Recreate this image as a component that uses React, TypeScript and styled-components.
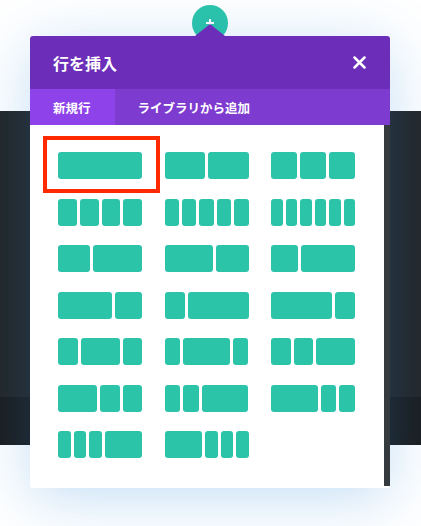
import styled, { createGlobalStyle } from 'styled-components';

const GlobalStyle = createGlobalStyle`
  body {
    margin: 0;
    background: #fff;
    font-family: 'Noto Sans CJK JP', 'Noto Sans', sans-serif;
  }
`;

const LAYOUTS: number[][] = [
  [1],
  [1, 1],
  [1, 1, 1],
  [1, 1, 1, 1],
  [1, 1, 1, 1, 1],
  [1, 1, 1, 1, 1, 1],
  [2, 3],
  [3, 2],
  [1, 2],
  [2, 1],
  [1, 3],
  [3, 1],
  [1, 2, 1],
  [1, 3, 1],
  [1, 1, 2],
  [2, 1, 1],
  [1, 1, 3],
  [3, 1, 1],
  [1, 1, 1, 3],
  [3, 1, 1, 1],
];

const App = () => {
  return (
    <Page>
      <GlobalStyle />
      <TopSpace />
      <DarkSection />
      <DarkerSection />

      <AddButton>
        <svg width="10" height="10" viewBox="0 0 10 10">
          <path d="M5 1v8M1 5h8" stroke="#fff" strokeWidth="2" />
        </svg>
      </AddButton>

      <Modal>
        <Pointer />
        <Header>
          <Title>行を挿入</Title>
          <CloseButton>
            <svg width="13" height="13" viewBox="0 0 13 13">
              <path d="M1.5 1.5l10 10M11.5 1.5l-10 10" stroke="#fff" strokeWidth="2.5" strokeLinecap="round" />
            </svg>
          </CloseButton>
        </Header>
        <Tabs>
          <Tab $active>新規行</Tab>
          <Tab>ライブラリから追加</Tab>
        </Tabs>
        <Body>
          <LayoutGrid>
            {LAYOUTS.map((cols, i) => (
              <LayoutOption key={i} $selected={i === 0}>
                {cols.map((c, j) => (
                  <Column key={j} $grow={c} />
                ))}
              </LayoutOption>
            ))}
          </LayoutGrid>
          <Scrollbar />
        </Body>
      </Modal>
    </Page>
  );
};

export default App;

const Page = styled.div`
  position: relative;
  width: 421px;
  height: 526px;
  overflow: hidden;
`;

const TopSpace = styled.div`
  height: 111px;
`;

const DarkSection = styled.div`
  height: 286px;
  background: #232527;
`;

const DarkerSection = styled.div`
  height: 48px;
  background: #1b1c1d;
`;

const AddButton = styled.div`
  position: absolute;
  left: 192px;
  top: 5px;
  width: 36px;
  height: 36px;
  border-radius: 50%;
  background: #2bc4a9;
  display: flex;
  align-items: center;
  justify-content: center;
`;

const Modal = styled.div`
  position: absolute;
  left: 30px;
  top: 36px;
  width: 360px;
  background: #fff;
  border-radius: 3px;
  box-shadow: 0 10px 60px rgba(43, 135, 218, 0.28);
`;

const Pointer = styled.div`
  position: absolute;
  left: 165px;
  top: -12px;
  width: 0;
  height: 0;
  border-left: 15px solid transparent;
  border-right: 15px solid transparent;
  border-bottom: 12px solid #6c2eb9;
`;

const Header = styled.div`
  height: 53px;
  background: #6c2eb9;
  border-radius: 3px 3px 0 0;
  display: flex;
  align-items: center;
  justify-content: space-between;
  padding: 0 24px 0 23px;
`;

const Title = styled.div`
  color: #fff;
  font-size: 16px;
  font-weight: 700;
`;

const CloseButton = styled.div`
  display: flex;
  align-items: center;
  cursor: pointer;
`;

const Tabs = styled.div`
  height: 36px;
  background: #7d3bcf;
  display: flex;
`;

const Tab = styled.div<{ $active?: boolean }>`
  display: flex;
  align-items: center;
  padding: 0 24px 0 23px;
  color: #fff;
  font-size: 12.5px;
  font-weight: 700;
  background: ${({ $active }) => ($active ? '#8e42ea' : 'transparent')};
`;

const Body = styled.div`
  display: flex;
  justify-content: space-between;
`;

const LayoutGrid = styled.div`
  display: grid;
  grid-template-columns: repeat(3, 84px);
  grid-auto-rows: 27px;
  column-gap: 22.5px;
  row-gap: 19.5px;
  padding: 27px 0 30px 28px;
`;

const LayoutOption = styled.div<{ $selected?: boolean }>`
  position: relative;
  display: flex;
  gap: 3px;
  cursor: pointer;

  ${({ $selected }) =>
    $selected &&
    `
    &::after {
      content: '';
      position: absolute;
      top: -16px;
      left: -15px;
      right: -18px;
      bottom: -14px;
      border: 4px solid #ff2a00;
    }
  `}
`;

const Column = styled.div<{ $grow: number }>`
  flex: ${({ $grow }) => $grow} 1 0;
  border-radius: 3px;
  background: #2bc4a9;
`;

const Scrollbar = styled.div`
  width: 6px;
  margin-bottom: 2px;
  background: #343a3e;
`;
